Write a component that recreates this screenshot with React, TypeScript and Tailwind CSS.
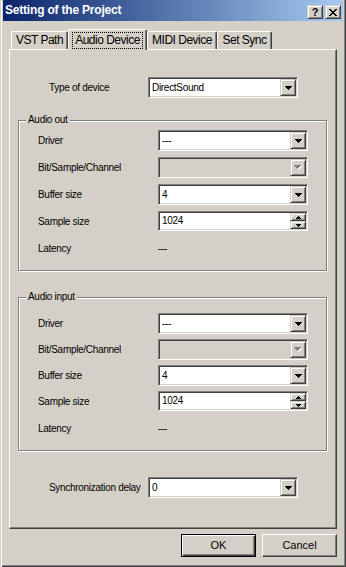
import React from 'react';

const sunken =
  'border border-t-[#808080] border-l-[#808080] border-b-white border-r-white shadow-[inset_1px_1px_0_#404040,inset_-1px_-1px_0_#d4d0c8]';
const raised =
  'border border-t-[#d4d0c8] border-l-[#d4d0c8] border-b-[#404040] border-r-[#404040] shadow-[inset_1px_1px_0_#fff,inset_-1px_-1px_0_#808080]';

function DownArrow({ disabled }: { disabled?: boolean }) {
  if (disabled) {
    return (
      <svg width="8" height="5" shapeRendering="crispEdges">
        <path d="M1 1h7v1H1zM2 2h5v1H2zM3 3h3v1H3zM4 4h1v1H4z" fill="#fff" />
        <path d="M0 0h7v1H0zM1 1h5v1H1zM2 2h3v1H2zM3 3h1v1H3z" fill="#808080" />
      </svg>
    );
  }
  return (
    <svg width="7" height="4" shapeRendering="crispEdges">
      <path d="M0 0h7v1H0zM1 1h5v1H1zM2 2h3v1H2zM3 3h1v1H3z" fill="#000" />
    </svg>
  );
}

function Combo({ value, disabled }: { value?: string; disabled?: boolean }) {
  return (
    <div
      className={`flex h-[21px] w-[150px] p-[1px] ${sunken} ${
        disabled ? 'bg-[#d4d0c8]' : 'bg-white'
      }`}
    >
      <div className="flex-1 pl-[2px] leading-[17px]">{value}</div>
      <div className={`flex h-full w-[16px] items-center justify-center bg-[#d4d0c8] ${raised}`}>
        <DownArrow disabled={disabled} />
      </div>
    </div>
  );
}

function Spin({ value }: { value: string }) {
  return (
    <div className={`flex h-[20px] w-[150px] p-[1px] bg-white ${sunken}`}>
      <div className="flex-1 pl-[2px] leading-[16px]">{value}</div>
      <div className="flex w-[16px] flex-col">
        <div className={`flex flex-1 items-center justify-center bg-[#d4d0c8] ${raised}`}>
          <svg width="5" height="3" shapeRendering="crispEdges">
            <path d="M2 0h1v1H2zM1 1h3v1H1zM0 2h5v1H0z" fill="#000" />
          </svg>
        </div>
        <div className={`flex flex-1 items-center justify-center bg-[#d4d0c8] ${raised}`}>
          <svg width="5" height="3" shapeRendering="crispEdges">
            <path d="M0 0h5v1H0zM1 1h3v1H1zM2 2h1v1H2z" fill="#000" />
          </svg>
        </div>
      </div>
    </div>
  );
}

function Row({ label, children }: { label: string; children: React.ReactNode }) {
  return (
    <div className="flex h-[21px] items-center">
      <div className="w-[120px]">{label}</div>
      {children}
    </div>
  );
}

function Group({
  title,
  top,
  gap,
  height,
}: {
  title: string;
  top: string;
  gap: string;
  height: string;
}) {
  return (
    <div
      className={`relative ml-[8px] w-[309px] ${height} border border-[#808080] pl-[19px] ${top} shadow-[1px_1px_0_#fff,inset_1px_1px_0_#fff]`}
    >
      <span className="absolute -top-[8px] left-[7px] bg-[#d4d0c8] px-[2px] leading-[13px]">
        {title}
      </span>
      <div className={`flex flex-col ${gap}`}>
        <Row label="Driver">
          <Combo value="---" />
        </Row>
        <Row label="Bit/Sample/Channel">
          <Combo disabled />
        </Row>
        <Row label="Buffer size">
          <Combo value="4" />
        </Row>
        <div className="flex h-[20px] items-center">
          <div className="w-[120px]">Sample size</div>
          <Spin value="1024" />
        </div>
      </div>
      <div className="mt-[7px] flex h-[21px] items-center">
        <div className="w-[120px]">Latency</div>
        <div>---</div>
      </div>
    </div>
  );
}

function Tab({ label, w }: { label: string; w: string }) {
  return (
    <div
      className={`flex h-[18px] ${w} items-center justify-center rounded-t-[2px] border-t border-l border-r border-t-white border-l-white border-r-[#404040] shadow-[inset_-1px_0_0_#808080] text-[12px] tracking-[-0.5px]`}
    >
      {label}
    </div>
  );
}

export default function App() {
  return (
    <div className="relative h-[567px] w-[346px] overflow-hidden whitespace-nowrap bg-[#d4d0c8] font-['Liberation_Sans',sans-serif] text-[10px] leading-[13px] tracking-[-0.3px] text-black shadow-[inset_1px_0_0_#d4d0c8,inset_2px_0_0_#fff,inset_-1px_-1px_0_#404040,inset_-2px_-2px_0_#808080]">
      {/* title bar */}
      <div className="mx-[3px] flex h-[21px] items-center bg-linear-to-r/srgb from-[#0a246a] to-[#a6caf0] pl-[2px] pr-[2px]">
        <div className="flex-1 text-[12px] font-bold tracking-[-0.2px] text-white">
          Setting of the Project
        </div>
        <div className="mt-[3px] flex gap-[2px]">
          <div className={`flex h-[14px] w-[16px] items-center justify-center bg-[#d4d0c8] ${raised} text-[11px] leading-none font-bold tracking-normal`}>
            ?
          </div>
          <div className={`flex h-[14px] w-[16px] items-center justify-center bg-[#d4d0c8] ${raised}`}>
            <svg width="8" height="7" shapeRendering="crispEdges">
              <path
                d="M0 0h2v1H0zM6 0h2v1H6zM1 1h2v1H1zM5 1h2v1H5zM2 2h4v1H2zM3 3h2v1H3zM2 4h4v1H2zM1 5h2v1H1zM5 5h2v1H5zM0 6h2v1H0zM6 6h2v1H6z"
                fill="#000"
              />
            </svg>
          </div>
        </div>
      </div>

      <div className="pl-[9px]">
        {/* tabs */}
        <div className="mt-[8px] flex h-[20px] items-end pl-[2px]">
          <Tab label="VST Path" w="w-[57px]" />
          <div className="relative z-10 -mb-px flex h-[21px] w-[79px] items-center justify-center rounded-t-[2px] border-t border-l border-r border-t-white border-l-white border-r-[#404040] bg-[#d4d0c8] shadow-[inset_-1px_0_0_#808080] text-[12px] tracking-[-0.5px]">
            <span className="border border-dotted border-black px-[2px] leading-[15px]">
              Audio Device
            </span>
          </div>
          <Tab label="MIDI Device" w="w-[70px]" />
          <Tab label="Set Sync" w="w-[55px]" />
        </div>

        {/* panel */}
        <div className="h-[480px] w-[328px] border border-white border-r-[#404040] border-b-[#404040] pt-[27px] shadow-[inset_-1px_-1px_0_#808080]">
          <div className="ml-[39px] flex h-[21px] items-center">
            <div className="w-[99px]">Type of device</div>
            <Combo value="DirectSound" />
          </div>

          <div className="mt-[22px]">
            <Group title="Audio out" top="pt-[9px]" gap="gap-[6px]" height="h-[151px]" />
          </div>
          <div className="mt-[26px]">
            <Group title="Audio input" top="pt-[15px]" gap="gap-[5px]" height="h-[154px]" />
          </div>

          <div className="ml-[39px] mt-[26px] flex h-[21px] items-center">
            <div className="w-[99px]">Synchronization delay</div>
            <Combo value="0" />
          </div>
        </div>

        {/* buttons */}
        <div className="mt-[5px] flex w-[328px] justify-end gap-[6px] text-[11px] tracking-normal">
          <button className="h-[23px] w-[75px] border border-black bg-[#d4d0c8] shadow-[inset_1px_1px_0_#fff,inset_-1px_-1px_0_#404040,inset_-2px_-2px_0_#808080]">
            OK
          </button>
          <button className="h-[23px] w-[75px] border border-t-white border-l-white border-b-[#404040] border-r-[#404040] bg-[#d4d0c8] shadow-[inset_-1px_-1px_0_#808080]">
            Cancel
          </button>
        </div>
      </div>
    </div>
  );
}
